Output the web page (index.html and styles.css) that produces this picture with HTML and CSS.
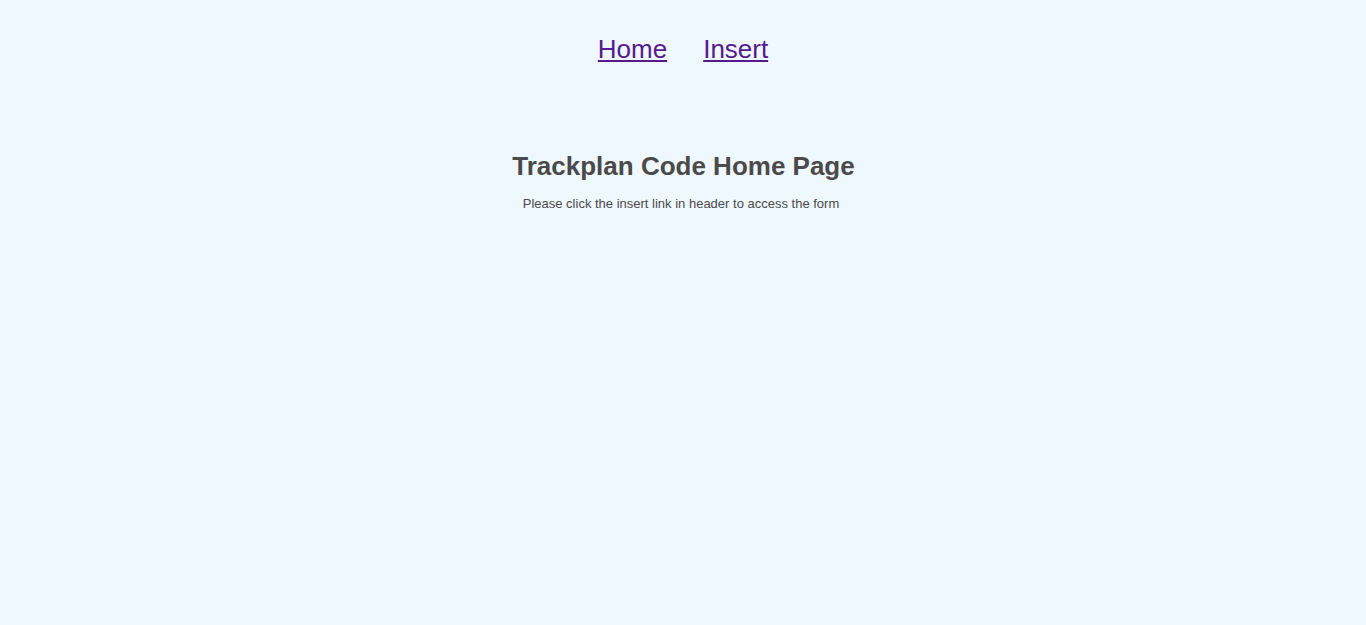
FILE: index.html
```html
<!DOCTYPE html>
<html>
<head>
<meta charset="utf-8">
<link rel="stylesheet" href="styles.css">
</head>
<body>
<header class="header">
  <nav class="nav">
    <a class="nav-link" href="#">Home</a>
    <a class="nav-link" href="#">Insert</a>
  </nav>
</header>
<main class="main">
  <h1 class="title">Trackplan Code Home Page</h1>
  <p class="lead">Please click the insert link in header to access the form</p>
</main>
</body>
</html>
```
FILE: styles.css
```css
html, body {
  margin: 0;
  padding: 0;
  background: #f0f8ff;
  font-family: "Liberation Sans", Arial, sans-serif;
}
.header {
  padding-top: 32px;
}
.nav {
  display: flex;
  justify-content: center;
  gap: 36px;
}
.nav-link {
  font-size: 26px;
  line-height: 34px;
  color: #551a8b;
  text-decoration: underline;
}
.main {
  text-align: center;
  color: #4a4a4a;
  padding-top: 85px;
}
.title {
  margin: 0;
  padding-left: 1px;
  font-size: 26px;
  line-height: 30px;
  font-weight: bold;
}
.lead {
  margin: 15px 0 0;
  padding-right: 4px;
  font-size: 13px;
  line-height: 16px;
}
```
